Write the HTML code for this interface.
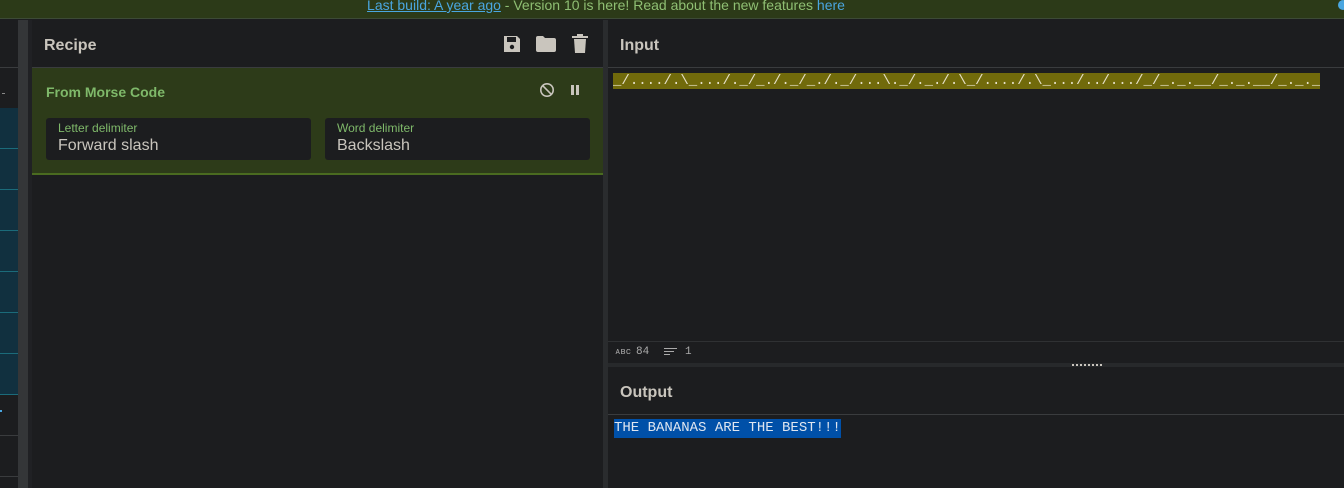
<!DOCTYPE html>
<html><head><style>
*{margin:0;padding:0;box-sizing:border-box}
body{width:1344px;height:488px;background:#1c1d1f;font-family:"Liberation Sans",sans-serif;position:relative;overflow:hidden;color:#c9c5bd}
.a{position:absolute}
.top{left:0;top:0;width:1344px;height:19px;background:#2c3a18;border-bottom:1px solid #3d4a36;font-size:14px;color:#8fbf73;text-align:center;line-height:11px}
.top a{color:#4aa6e0;text-decoration:underline}
.hd{font-size:16px;font-weight:bold;color:#c9c5bd}
.fld{background:#1c1d1f;border-radius:3px;height:42px}
.fld .l{position:absolute;left:12px;top:3px;font-size:12px;color:#7fb96a}
.fld .v{position:absolute;left:12px;top:19px;font-size:16px;color:#c9c5bd}
.mono{font-family:"Liberation Mono",monospace}
</style></head><body>
<div class="a top"><span style="position:relative;left:-66px"><a>Last build: A year ago</a> - Version 10 is here! Read about the new features <a style="text-decoration:none">here</a></span></div>
<div class="a" style="left:1338px;top:0;width:10px;height:10px;border-radius:50%;background:#4aa6e0"></div>
<div class="a" style="left:0;top:20px;width:18px;height:468px;background:#1c1d1f"></div>
<div class="a" style="left:0;top:67px;width:18px;height:1px;background:#3a3c3e"></div>
<div class="a" style="left:2px;top:93px;width:3px;height:1px;background:#888"></div>
<div class="a" style="left:0;top:108px;width:18px;height:287px;background:#11303f"></div>
<div class="a" style="left:0;top:148px;width:18px;height:1px;background:#1b6b7a"></div>
<div class="a" style="left:0;top:189px;width:18px;height:1px;background:#1b6b7a"></div>
<div class="a" style="left:0;top:230px;width:18px;height:1px;background:#1b6b7a"></div>
<div class="a" style="left:0;top:271px;width:18px;height:1px;background:#1b6b7a"></div>
<div class="a" style="left:0;top:312px;width:18px;height:1px;background:#1b6b7a"></div>
<div class="a" style="left:0;top:353px;width:18px;height:1px;background:#1b6b7a"></div>
<div class="a" style="left:0;top:394px;width:18px;height:1px;background:#1b6b7a"></div>
<div class="a" style="left:0;top:410px;width:2px;height:2px;background:#4aa6e0"></div>
<div class="a" style="left:0;top:435px;width:18px;height:1px;background:#3a3c3e"></div>
<div class="a" style="left:0;top:476px;width:18px;height:1px;background:#3a3c3e"></div>
<div class="a" style="left:18px;top:20px;width:10px;height:468px;background:#343638"></div>
<div class="a" style="left:28px;top:20px;width:4px;height:468px;background:#202124"></div>
<div class="a hd" style="left:44px;top:37px">Recipe</div>
<svg class="a" style="left:502px;top:34px" width="20" height="20" viewBox="0 0 20 20"><path d="M2 2h13l3 3v13H2z" fill="#c9c5bd"/><rect x="5" y="3" width="9" height="5" fill="#1c1d1f"/><circle cx="10" cy="13" r="2.2" fill="#1c1d1f"/></svg>
<svg class="a" style="left:535px;top:34px" width="22" height="20" viewBox="0 0 22 20"><path d="M1 4q0-2 2-2h5l2 2h9q2 0 2 2v10q0 2-2 2H3q-2 0-2-2z" fill="#c9c5bd"/></svg>
<svg class="a" style="left:571px;top:34px" width="18" height="20" viewBox="0 0 18 20"><rect x="1" y="2" width="16" height="2" fill="#c9c5bd"/><rect x="6" y="0" width="6" height="3" fill="#c9c5bd"/><path d="M3 5h12l-1 14H4z" fill="#c9c5bd"/></svg>
<div class="a" style="left:32px;top:67px;width:571px;height:1px;background:#3a3c3e"></div>
<div class="a" style="left:32px;top:68px;width:571px;height:107px;background:#2d3b19;border-bottom:2px solid #4a6b20"></div>
<div class="a" style="left:46px;top:84px;font-size:14px;font-weight:bold;color:#7fb96a">From Morse Code</div>
<svg class="a" style="left:539px;top:82px" width="16" height="16" viewBox="0 0 16 16"><circle cx="8" cy="8" r="6.2" fill="none" stroke="#c9c5bd" stroke-width="1.6"/><path d="M3.6 3.6l8.8 8.8" stroke="#c9c5bd" stroke-width="1.6"/></svg>
<div class="a" style="left:571px;top:85px;width:3px;height:10px;background:#c9c5bd"></div>
<div class="a" style="left:576px;top:85px;width:3px;height:10px;background:#c9c5bd"></div>
<div class="a fld" style="left:46px;top:118px;width:265px"><span class="l">Letter delimiter</span><span class="v">Forward slash</span></div>
<div class="a fld" style="left:325px;top:118px;width:265px"><span class="l">Word delimiter</span><span class="v">Backslash</span></div>
<div class="a" style="left:603px;top:20px;width:5px;height:468px;background:#2a2c2e"></div>
<div class="a hd" style="left:620px;top:37px">Input</div>
<div class="a" style="left:608px;top:67px;width:736px;height:1px;background:#3a3c3e"></div>
<div class="a mono" style="left:613px;top:73px;width:707px;height:16px;background:#716a0b;color:#e6e0c8;font-size:14px;line-height:16px;letter-spacing:0.02px;white-space:pre;overflow:hidden">_/..../.\_.../._/_./._/_./._/...\._/._./.\_/..../.\_.../../.../_/_._.__/_._.__/_._.__</div>
<div class="a" style="left:608px;top:341px;width:736px;height:1px;background:#2f3133"></div>
<div class="a mono" style="left:615px;top:347px;font-size:9px;color:#aaa">ᴀʙᴄ</div>
<div class="a mono" style="left:636px;top:346px;font-size:11px;color:#aaa">84</div>
<div class="a" style="left:664px;top:348px;width:13px;height:1px;background:#aaa"></div>
<div class="a" style="left:664px;top:351px;width:10px;height:1px;background:#aaa"></div>
<div class="a" style="left:664px;top:354px;width:6px;height:1px;background:#aaa"></div>
<div class="a mono" style="left:685px;top:346px;font-size:11px;color:#aaa">1</div>
<div class="a" style="left:608px;top:363px;width:736px;height:4px;background:#27292b"></div>
<div class="a" style="left:1072px;top:364px;width:30px;height:2px;border-top:2px dotted #c9c5bd"></div>
<div class="a hd" style="left:620px;top:384px">Output</div>
<div class="a" style="left:608px;top:414px;width:736px;height:1px;background:#3a3c3e"></div>
<div class="a mono" style="left:614px;top:419px;width:227px;height:19px;background:#0050a8;color:#dfe6f0;font-size:14px;line-height:19px;white-space:pre">THE BANANAS ARE THE BEST!!!</div>
</body></html>
